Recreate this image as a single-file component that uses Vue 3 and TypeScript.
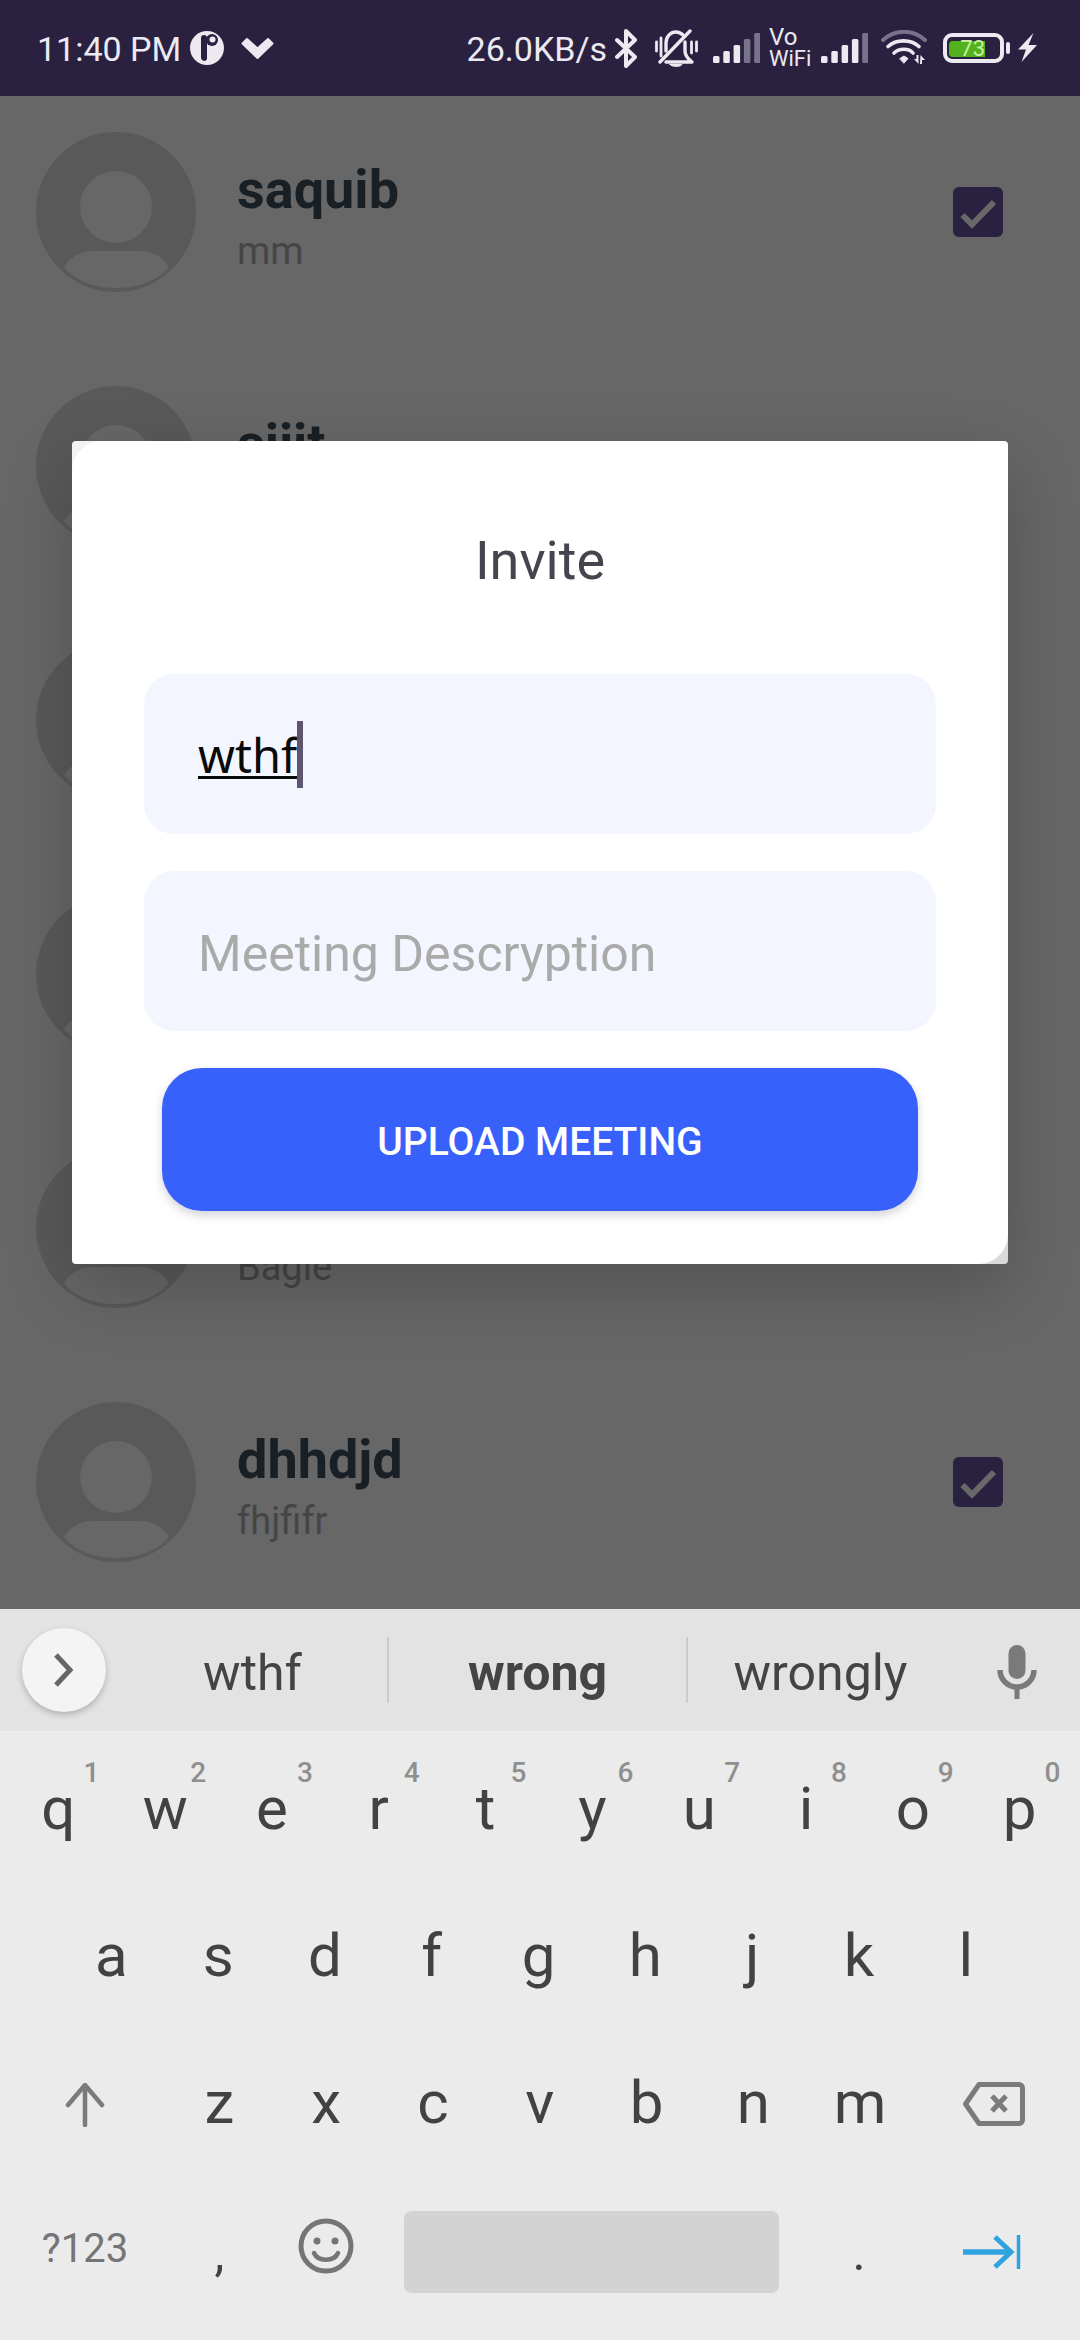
<script setup lang="ts">
const rows = [
  { name: 'saquib', sub: 'mm', check: true },
  { name: 'sijit', sub: '', check: false },
  { name: '', sub: '', check: false },
  { name: '', sub: '', check: false },
  { name: '', sub: 'Bagle', check: false },
  { name: 'dhhdjd', sub: 'fhjfifr', check: true },
]
const row1 = ['q', 'w', 'e', 'r', 't', 'y', 'u', 'i', 'o', 'p']
const nums = ['1', '2', '3', '4', '5', '6', '7', '8', '9', '0']
const row2 = ['a', 's', 'd', 'f', 'g', 'h', 'j', 'k', 'l']
const row3 = ['z', 'x', 'c', 'v', 'b', 'n', 'm']
const barH = [7, 12, 18, 24, 30]
const signals = [3, 4]
</script>

<template>
  <div class="phone">
    <header class="status">
      <div class="status-left">
        <span class="time">11:40 PM</span>
        <svg class="ic-clock" viewBox="0 0 34 34">
          <circle cx="17" cy="17" r="17" fill="#ece9f1" />
          <path d="M14 4 a3 3 0 0 1 3 3 V27 a3 3 0 0 1 -3 3 a3.500 3.500 0 0 1 -3 -3 V7 a3 3 0 0 1 3 -3Z" fill="#2a2141" />
          <circle cx="22" cy="9" r="6" fill="#2a2141" />
          <circle cx="22.500" cy="8.500" r="3" fill="#ece9f1" />
        </svg>
        <svg class="ic-chev" viewBox="0 0 33 23">
          <path d="M1.500 6.500 L6 2 L16.500 11.500 L27 2 L31.500 6.500 L16.500 21 Z" fill="#ece9f1" stroke="#ece9f1" stroke-width="2" stroke-linejoin="round" />
        </svg>
      </div>
      <div class="status-right">
        <span class="speed">26.0KB/s</span>
        <svg class="ic-bt" viewBox="0 0 24 39" fill="none" stroke="#ece9f1" stroke-width="4" stroke-linejoin="round" stroke-linecap="round">
          <path d="M3 11 L21 28 L12 37 V2 L21 11 L3 28" />
        </svg>
        <svg class="ic-bell" viewBox="0 0 43 38" fill="none" stroke="#ece9f1" stroke-width="3.400" stroke-linecap="round" stroke-linejoin="round">
          <path d="M1.500 13 V22 M6 9 V27 M36.500 13 V24 M41.500 13 V22" stroke-width="2.800" />
          <path d="M11 22 V14 C11 7 16 3 21 3 C24 3 26 4 28 6" />
          <path d="M30 13 V22 C30 26 33 30 37 33 H11" />
          <path d="M5 33 L35 2" />
          <path d="M15 35.500 H27 C26 38 16 38 15 35.500 Z" fill="#ece9f1" stroke-width="1" />
        </svg>
        <template v-for="(lit, si) in signals" :key="si">
          <svg class="ic-signal" viewBox="0 0 47 30">
            <rect
              v-for="(h, i) in barH"
              :key="i"
              :x="i * 10.3"
              :y="30 - h"
              width="6.500"
              :height="h"
              rx="1.500"
              :fill="i < lit ? '#ece9f1' : '#77738a'"
            />
          </svg>
          <div v-if="si === 0" class="vowifi"><span class="vo">Vo</span><span>WiFi</span></div>
        </template>
        <svg class="ic-wifi" viewBox="0 0 46 36" fill="none" stroke-linecap="round">
          <path d="M2 10 C14 -1 32 -1 44 10" stroke="#77738a" stroke-width="4" />
          <path d="M7 16.500 C15 9 30 9 38 16.500" stroke="#ece9f1" stroke-width="3.600" />
          <path d="M13 23 C18 18 28 18 32 23" stroke="#ece9f1" stroke-width="3.600" />
          <path d="M19 28.500 L23 26 L27 28.500 L23 33 Z" fill="#ece9f1" stroke="#ece9f1" stroke-width="1" />
          <path d="M37.500 25 V34 H35.500 V30 H33 Z M39 25 H41 V29 H44 L39.500 34 Z" fill="#ece9f1" transform="matrix(1 0 0 -1 0 59)" />
        </svg>
        <div class="battery">
          <div class="batt-body">
            <div class="batt-fill"><span>73</span></div>
          </div>
          <div class="batt-nub"></div>
        </div>
        <svg class="ic-bolt" viewBox="0 0 19 30">
          <path d="M15.500 0 L0 16.500 H8 L3.500 29 L19 12 H10.500 Z" fill="#ece9f1" />
        </svg>
      </div>
    </header>

    <main class="list">
      <div v-for="(r, i) in rows" :key="i" class="row">
        <svg class="avatar" viewBox="0 0 160 160">
          <circle cx="80" cy="80" r="80" fill="#595959" />
          <circle cx="80" cy="75" r="36" fill="#676767" />
          <path d="M28 135 C34 125 45 119 56 119 H104 C115 119 127 125 133 135 C122 149 102 156 80 156 C58 156 39 149 28 135 Z" fill="#676767" />
        </svg>
        <div class="info">
          <div class="name">{{ r.name || '\u00a0' }}</div>
          <div class="sub">{{ r.sub || '\u00a0' }}</div>
        </div>
        <div v-if="r.check" class="check">
          <svg viewBox="0 0 50 50" class="check-ic">
            <path d="M9.500 28 L19 37.500 L41 15" fill="none" stroke="#686868" stroke-width="6" />
          </svg>
        </div>
      </div>

      <section class="modal">
        <div class="modal-inner">
          <h2 class="title">Invite</h2>
          <div class="field">
            <span class="typed">wthf</span><span class="cursor"></span>
          </div>
          <div class="field second">
            <span class="placeholder">Meeting Descryption</span>
          </div>
          <div class="upload">UPLOAD MEETING</div>
        </div>
      </section>
    </main>

    <footer class="keyboard">
      <div class="strip">
        <div class="bubble-cell">
          <div class="bubble">
            <svg class="ic-more" viewBox="0 0 22 34">
              <path d="M3 2 L17 17 L3 32" fill="none" stroke="#666" stroke-width="5" />
            </svg>
          </div>
        </div>
        <div class="sugg s1">wthf</div>
        <div class="divider"></div>
        <div class="sugg s2">wrong</div>
        <div class="divider"></div>
        <div class="sugg s3">wrongly</div>
        <div class="mic-cell">
          <svg class="ic-mic" viewBox="0 0 40 54">
            <rect x="11.500" y="0" width="17" height="34" rx="8.500" fill="#7a7a7a" />
            <path d="M3 25 A17 17 0 0 0 37 25" fill="none" stroke="#7a7a7a" stroke-width="5.500" />
            <rect x="17.500" y="41" width="5" height="13" fill="#7a7a7a" />
          </svg>
        </div>
      </div>

      <div class="kb-row r1">
        <div v-for="(k, i) in row1" :key="k" class="key">
          {{ k }}<span class="num">{{ nums[i] }}</span>
        </div>
      </div>
      <div class="kb-row r2">
        <div v-for="k in row2" :key="k" class="key">{{ k }}</div>
      </div>
      <div class="kb-row r3">
        <div class="side-key shift">
          <svg class="ic-shift" viewBox="0 0 44 44" fill="none" stroke="#7b7b7b" stroke-width="4.500" stroke-linecap="round" stroke-linejoin="round">
            <path d="M22 42 V2 M5 22 L22 2 L39 22" />
          </svg>
        </div>
        <div v-for="k in row3" :key="k" class="key">{{ k }}</div>
        <div class="side-key back">
          <svg class="ic-back" viewBox="0 0 62 44" fill="none" stroke="#7b7b7b" stroke-width="5" stroke-linejoin="round">
            <path d="M16 2.500 H56 A3.500 3.500 0 0 1 59.500 6 V38 A3.500 3.500 0 0 1 56 41.500 H16 L2.500 22 Z" />
            <path d="M29 14 L43 29 M43 14 L29 29" stroke-width="5" />
          </svg>
        </div>
      </div>
      <div class="kb-row r4">
        <div class="side-key sym">?123</div>
        <div class="key punct">,</div>
        <div class="key emoji-key">
          <svg class="ic-emoji" viewBox="0 0 56 56" fill="none" stroke="#757575" stroke-width="5">
            <circle cx="28" cy="28" r="25" />
            <circle cx="19" cy="23" r="3.500" fill="#757575" stroke="none" />
            <circle cx="37" cy="23" r="3.500" fill="#757575" stroke="none" />
            <path d="M16 35 C20 44 36 44 40 35" stroke-width="4.500" stroke-linecap="round" />
          </svg>
        </div>
        <div class="space-key"><div class="space-bar"></div></div>
        <div class="key punct">.</div>
        <div class="side-key tab">
          <svg class="ic-tab" viewBox="0 0 58 34" fill="none" stroke="#2fa3e0">
            <path d="M0 17 H46" stroke-width="5.500" />
            <path d="M32 2 L48 17 L32 32" stroke-width="5" />
            <path d="M55.500 0 V34" stroke-width="3.500" />
          </svg>
        </div>
      </div>
    </footer>
  </div>
</template>

<style>
html,
body {
  margin: 0;
  padding: 0;
  background: #676767;
}
</style>

<style scoped>
.phone {
  width: 1080px;
  height: 2340px;
  display: flex;
  flex-direction: column;
  overflow: hidden;
  font-family: Roboto, "Noto Sans", sans-serif;
  position: relative;
}

/* status bar */
.status {
  height: 96px;
  flex: none;
  background: #2a2141;
  color: #ece9f1;
  display: flex;
  justify-content: space-between;
  align-items: center;
  padding: 0 43px 0 37px;
  box-sizing: border-box;
}
.status-left,
.status-right {
  display: flex;
  align-items: center;
}
.time,
.speed {
  font-size: 34px;
  line-height: 40px;
  padding-top: 2px;
}
.time {
  width: 153px;
  white-space: nowrap;
}
.speed {
  margin-right: 7px;
  white-space: nowrap;
}
.ic-clock {
  width: 34px;
  height: 34px;
}
.ic-chev {
  width: 33px;
  height: 23px;
  margin-left: 17px;
}
.ic-bt {
  width: 24px;
  height: 39px;
  margin-right: 17px;
}
.ic-bell {
  width: 43px;
  height: 38px;
  margin-right: 15px;
}
.ic-signal {
  width: 47px;
  height: 30px;
}
.vowifi {
  width: 42px;
  margin: 0 10px 0 9px;
  display: flex;
  flex-direction: column;
  font-size: 22px;
  line-height: 22px;
  white-space: nowrap;
}
.vo {
  font-size: 24px;
}
.ic-wifi {
  width: 46px;
  height: 36px;
  margin-left: 13px;
  margin-right: 16px;
}
.battery {
  display: flex;
  align-items: center;
  width: 67px;
  margin-right: 8px;
}
.batt-body {
  width: 61px;
  height: 30px;
  border: 4px solid #ece9f1;
  border-radius: 9px;
  box-sizing: border-box;
  padding: 4px 0 0 2px;
}
.batt-fill {
  width: 36px;
  height: 16px;
  background: #52b11d;
  border-radius: 4px 0 0 4px;
  display: flex;
  justify-content: flex-end;
  align-items: center;
  font-size: 22px;
  line-height: 16px;
  color: #c6f0a4;
}
.batt-nub {
  width: 4px;
  height: 12px;
  margin-left: 2px;
  background: #ece9f1;
  border-radius: 2px;
}
.ic-bolt {
  width: 19px;
  height: 30px;
}

/* list */
.list {
  flex: 1;
  min-height: 0;
  position: relative;
  overflow: hidden;
  background: #676767;
  padding-top: 36px;
  box-sizing: border-box;
}
.row {
  display: flex;
  align-items: center;
  height: 160px;
  margin-bottom: 94px;
  padding-left: 36px;
}
.avatar {
  width: 160px;
  height: 160px;
  flex: none;
}
.info {
  margin-left: 41px;
  padding-top: 9px;
  display: flex;
  flex-direction: column;
}
.name {
  font-size: 54px;
  line-height: 60px;
  font-weight: 700;
  color: #181f25;
}
.sub {
  font-size: 38px;
  line-height: 44px;
  color: #454545;
  margin-top: 9px;
}
.check {
  width: 50px;
  height: 50px;
  margin-left: auto;
  margin-right: 77px;
  background: #2a2141;
  border-radius: 6px;
}
.check-ic {
  display: block;
  width: 50px;
  height: 50px;
}

/* modal */
.modal {
  position: absolute;
  left: 72px;
  top: 345px;
  width: 936px;
  height: 823px;
  border-radius: 4px;
  background: linear-gradient(135deg, #f2f2f2 0%, #ffffff 20%, #ffffff 85%, #d8d8d8 100%);
  box-shadow: 0 24px 70px rgba(0, 0, 0, 0.2);
}
.modal-inner {
  height: 100%;
  box-sizing: border-box;
  background: #fff;
  border-radius: 30px;
  padding: 88px 72px 0;
  display: flex;
  flex-direction: column;
}
.title {
  margin: 0 0 81px;
  font-size: 54px;
  line-height: 64px;
  font-weight: 400;
  color: #47444f;
  text-align: center;
}
.field {
  height: 160px;
  flex: none;
  background: #f3f6ff;
  border-radius: 30px;
  padding-left: 54px;
  display: flex;
  align-items: flex-start;
}
.field.second {
  margin-top: 37px;
}
.typed {
  margin-top: 48px;
  font-family: "Noto Sans", sans-serif;
  font-size: 47px;
  line-height: 66px;
  color: #0a0a0a;
  text-decoration: underline;
  text-decoration-thickness: 3px;
  text-underline-offset: 3px;
}
.cursor {
  width: 6px;
  height: 67px;
  margin-top: 47px;
  background: #5d566e;
}
.placeholder {
  margin-top: 55px;
  font-size: 50px;
  line-height: 56px;
  color: #aaaaaa;
}
.upload {
  margin: 37px 18px 0;
  height: 143px;
  flex: none;
  background: #3861fb;
  border-radius: 40px;
  box-shadow: 0 4px 10px rgba(50, 50, 93, 0.22);
  color: #fff;
  font-size: 39px;
  font-weight: 500;
  display: flex;
  align-items: center;
  justify-content: center;
  padding-top: 5px;
  box-sizing: border-box;
}

/* keyboard */
.keyboard {
  height: 731px;
  flex: none;
  background: #ebebeb;
  position: relative;
}
.strip {
  height: 122px;
  background: #e3e3e3;
  display: flex;
  align-items: center;
}
.bubble-cell {
  width: 118px;
  flex: none;
  padding-left: 22px;
  box-sizing: border-box;
}
.bubble {
  width: 84px;
  height: 84px;
  border-radius: 50%;
  background: #f4f4f4;
  box-shadow: 0 3px 6px rgba(0, 0, 0, 0.22);
  display: flex;
  align-items: center;
  justify-content: center;
}
.ic-more {
  width: 22px;
  height: 34px;
}
.sugg {
  font-size: 50px;
  line-height: 60px;
  color: #444;
  text-align: center;
  flex: none;
  padding-top: 6px;
}
.s1 {
  width: 269px;
}
.s2 {
  width: 297px;
  font-weight: 700;
}
.s3 {
  width: 265px;
}
.divider {
  width: 2px;
  height: 66px;
  flex: none;
  background: #cbcbcb;
}
.mic-cell {
  flex: 1;
  display: flex;
  justify-content: center;
  padding-top: 4px;
}
.ic-mic {
  width: 40px;
  height: 54px;
}
.kb-row {
  display: flex;
  height: 147px;
}
.r1 {
  padding-left: 5px;
}
.r2 {
  padding-left: 58px;
}
.key {
  width: 106.8px;
  flex: none;
  position: relative;
  text-align: center;
  font-size: 60px;
  line-height: 70px;
  padding-top: 43px;
  box-sizing: border-box;
  color: #424242;
}
.num {
  position: absolute;
  top: 28px;
  left: calc(50% + 23px);
  width: 20px;
  text-align: center;
  font-size: 28px;
  line-height: 28px;
  font-weight: 500;
  color: #8f8f8f;
}
.side-key {
  flex: none;
  display: flex;
  justify-content: center;
  align-items: flex-start;
}
.shift {
  width: 166px;
  padding-top: 58px;
  box-sizing: border-box;
  padding-left: 4px;
}
.ic-shift {
  width: 44px;
  height: 44px;
}
.back {
  width: 160px;
  padding-top: 57px;
  box-sizing: border-box;
}
.ic-back {
  width: 62px;
  height: 44px;
}
.sym {
  width: 166px;
  padding: 53px 0 0 4px;
  box-sizing: border-box;
  font-size: 40px;
  line-height: 47px;
  color: #757575;
}
.punct {
  font-size: 50px;
  line-height: 58px;
  padding-top: 52px;
}
.emoji-key {
  padding-top: 46px;
  line-height: 0;
}
.ic-emoji {
  width: 56px;
  height: 56px;
}
.space-key {
  width: 426px;
  flex: none;
  padding: 39px 27px 0 24px;
  box-sizing: border-box;
}
.space-bar {
  height: 82px;
  background: #d3d3d3;
  border-radius: 8px;
}
.tab {
  width: 160px;
  padding-top: 63px;
  box-sizing: border-box;
}
.ic-tab {
  width: 58px;
  height: 34px;
}
</style>
